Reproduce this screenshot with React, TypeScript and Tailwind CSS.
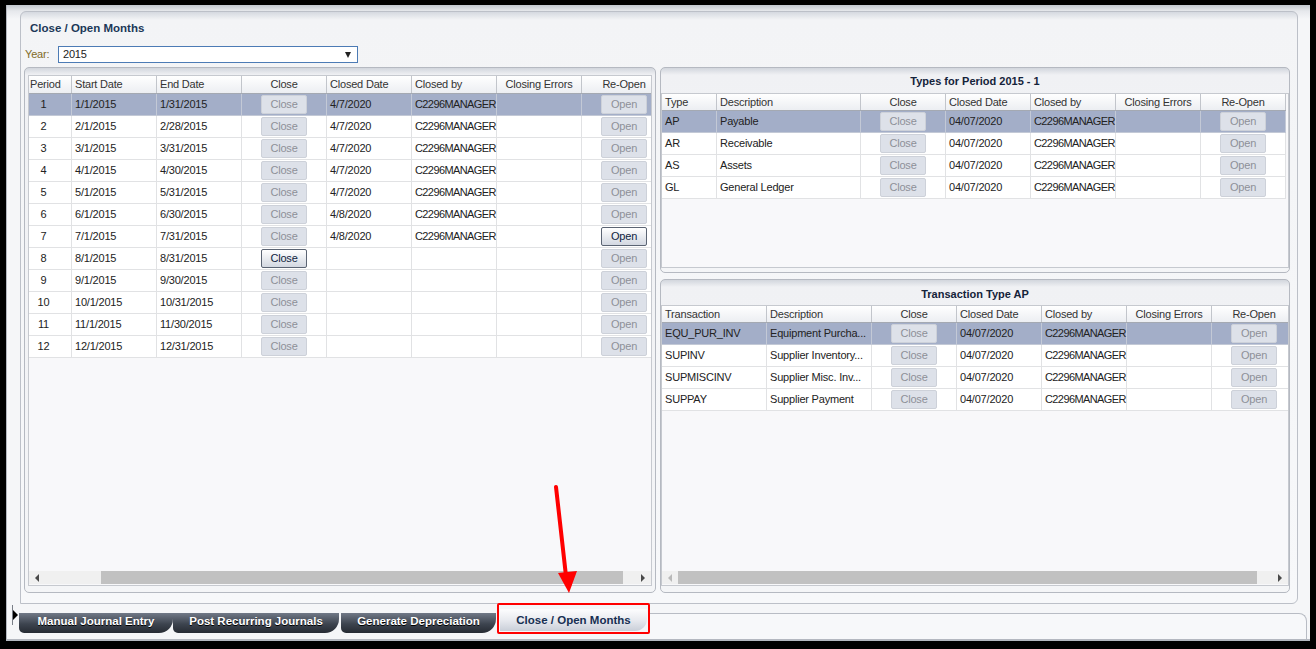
import React from 'react';

type Col = { label: string; w: string; head: string; cell: string };

const leftCols: Col[] = [
  { label: 'Period', w: 'w-[43px]', head: 'justify-start pl-[1px]', cell: 'justify-center pr-[13px]' },
  { label: 'Start Date', w: 'w-[85px]', head: 'justify-start pl-[3px]', cell: 'justify-start pl-[3px]' },
  { label: 'End Date', w: 'w-[85px]', head: 'justify-start pl-[3px]', cell: 'justify-start pl-[3px]' },
  { label: 'Close', w: 'w-[85px]', head: 'justify-center', cell: 'justify-center' },
  { label: 'Closed Date', w: 'w-[85px]', head: 'justify-start pl-[3px]', cell: 'justify-start pl-[3px]' },
  { label: 'Closed by', w: 'w-[85px]', head: 'justify-start pl-[3px]', cell: 'justify-start pl-[3px]' },
  { label: 'Closing Errors', w: 'w-[85px]', head: 'justify-center', cell: 'justify-start pl-[3px]' },
  { label: 'Re-Open', w: 'w-[85px]', head: 'justify-center', cell: 'justify-center' },
];

const typeCols: Col[] = [
  { label: 'Type', w: 'w-[55px]', head: 'justify-start pl-[3px]', cell: 'justify-start pl-[3px]' },
  { label: 'Description', w: 'w-[144px]', head: 'justify-start pl-[3px]', cell: 'justify-start pl-[3px]' },
  { label: 'Close', w: 'w-[85px]', head: 'justify-center', cell: 'justify-center' },
  { label: 'Closed Date', w: 'w-[85px]', head: 'justify-start pl-[3px]', cell: 'justify-start pl-[3px]' },
  { label: 'Closed by', w: 'w-[85px]', head: 'justify-start pl-[3px]', cell: 'justify-start pl-[3px]' },
  { label: 'Closing Errors', w: 'w-[85px]', head: 'justify-center', cell: 'justify-start pl-[3px]' },
  { label: 'Re-Open', w: 'w-[85px]', head: 'justify-center', cell: 'justify-center' },
];

const trxCols: Col[] = [
  { label: 'Transaction', w: 'w-[105px]', head: 'justify-start pl-[3px]', cell: 'justify-start pl-[3px]' },
  { label: 'Description', w: 'w-[105px]', head: 'justify-start pl-[3px]', cell: 'justify-start pl-[3px]' },
  { label: 'Close', w: 'w-[85px]', head: 'justify-center', cell: 'justify-center' },
  { label: 'Closed Date', w: 'w-[85px]', head: 'justify-start pl-[3px]', cell: 'justify-start pl-[3px]' },
  { label: 'Closed by', w: 'w-[85px]', head: 'justify-start pl-[3px]', cell: 'justify-start pl-[3px]' },
  { label: 'Closing Errors', w: 'w-[85px]', head: 'justify-center', cell: 'justify-start pl-[3px]' },
  { label: 'Re-Open', w: 'w-[85px]', head: 'justify-center', cell: 'justify-center' },
];

const ends = ['1/31', '2/28', '3/31', '4/30', '5/31', '6/30', '7/31', '8/31', '9/30', '10/31', '11/30', '12/31'];

const periodRows: string[][] = ends.map((end, i) => {
  const n = i + 1;
  const closed = n <= 7;
  return [
    String(n),
    `${n}/1/2015`,
    `${end}/2015`,
    n === 8 ? '#close!' : '#close',
    closed ? (n >= 6 ? '4/8/2020' : '4/7/2020') : '',
    closed ? 'C2296MANAGER' : '',
    '',
    n === 7 ? '#open!' : '#open',
  ];
});

const typeRows: string[][] = [
  ['AP', 'Payable'],
  ['AR', 'Receivable'],
  ['AS', 'Assets'],
  ['GL', 'General Ledger'],
].map(([t, d]) => [t, d, '#close', '04/07/2020', 'C2296MANAGER', '', '#open']);

const trxRows: string[][] = [
  ['EQU_PUR_INV', 'Equipment Purcha...'],
  ['SUPINV', 'Supplier Inventory...'],
  ['SUPMISCINV', 'Supplier Misc. Inv...'],
  ['SUPPAY', 'Supplier Payment'],
].map(([t, d]) => [t, d, '#close', '04/07/2020', 'C2296MANAGER', '', '#open']);

function Btn({ label, on }: { label: string; on?: boolean }) {
  if (on) {
    return (
      <span className="inline-flex h-[19px] w-[46px] items-center justify-center rounded-[2px] border border-[#5b6473] bg-gradient-to-b from-white to-[#d3d8e1] text-[#0f2340]">
        {label}
      </span>
    );
  }
  return (
    <span className="inline-flex h-[19px] w-[46px] items-center justify-center rounded-[2px] border border-[#cdd1d9] bg-[#dde1e9] text-[#8d9098]">
      {label}
    </span>
  );
}

function renderCell(v: string) {
  if (v === '#close') return <Btn label="Close" />;
  if (v === '#close!') return <Btn label="Close" on />;
  if (v === '#open') return <Btn label="Open" />;
  if (v === '#open!') return <Btn label="Open" on />;
  // the user name is wider in this font than in the original, so pull it in
  if (v === 'C2296MANAGER') return <span className="whitespace-nowrap tracking-[-0.6px]">{v}</span>;
  return <span className="whitespace-nowrap">{v}</span>;
}

function Grid({ cols, rows, headH }: { cols: Col[]; rows: string[][]; headH: string }) {
  return (
    <div className="flex w-max flex-col">
      <div className={`flex ${headH} border-b border-[#a4a9b2] bg-gradient-to-b from-white to-[#eceef2] text-[#333]`}>
        {cols.map((c, i) => (
          <div key={i} className={`${c.w} ${c.head} flex shrink-0 items-center whitespace-nowrap border-r border-[#c2c5cb]`}>
            {c.label}
          </div>
        ))}
      </div>
      {rows.map((r, ri) => (
        <div key={ri} className={`flex h-[22px] ${ri === 0 ? 'bg-[#a3aec8]' : 'bg-white'}`}>
          {r.map((v, ci) => (
            <div
              key={ci}
              className={`${cols[ci].w} ${cols[ci].cell} flex shrink-0 items-center border-b border-r ${
                ri === 0 ? 'border-[#c3c9d6]' : 'border-[#e1e2e4]'
              }`}
            >
              {renderCell(v)}
            </div>
          ))}
        </div>
      ))}
    </div>
  );
}

function ArrowL({ light }: { light?: boolean }) {
  return (
    <span
      className={`h-0 w-0 border-y-[4px] border-r-[4px] border-y-transparent ${light ? 'border-r-[#b9b9b9]' : 'border-r-[#4a4a4a]'}`}
    />
  );
}

function ArrowR() {
  return <span className="h-0 w-0 border-y-[4px] border-l-[4px] border-y-transparent border-l-[#4a4a4a]" />;
}

export default function App() {
  return (
    <div className="relative h-[649px] w-[1316px] overflow-hidden bg-black pb-[8px] pl-[6px] pr-[6px] pt-[5px] font-['Liberation_Sans',Arial,sans-serif] text-[11px] leading-none tracking-[-0.2px] text-[#222]">
      <div className="flex h-full flex-col border-b-[2px] border-l border-[#b4b8c0] bg-[linear-gradient(#c2c7cf,#e6e8ec_6px,#f5f6f8_14px)] pt-[6px]">
        {/* main panel */}
        <div className="ml-[13px] mr-[12px] flex h-[593px] flex-col rounded-t-[6px] rounded-br-[6px] border border-[#bcc0c8] bg-[linear-gradient(#d5d9e0,#f3f4f6_8px,#f7f8fa)] pl-[3px] pr-[7px]">
          <div className="ml-[6px] mt-[10px] h-[12px] text-[11.5px] font-bold leading-[12px] tracking-normal text-[#1b3858]">
            Close / Open Months
          </div>
          <div className="mt-[12px] flex h-[17px] items-center">
            <span className="ml-[1px] w-[33px] text-[#806a26]">Year:</span>
            <div className="flex h-[17px] w-[300px] items-center justify-between border border-[#4c7bb5] bg-white pl-[4px] pr-[6px] text-[#222]">
              <span>2015</span>
              <span className="h-0 w-0 border-x-[3.5px] border-t-[6px] border-x-transparent border-t-[#222]" />
            </div>
          </div>

          <div className="mt-[4px] flex h-[526px] gap-[4px]">
            {/* left panel */}
            <div className="flex h-full w-[632px] flex-col rounded-[5px] border border-[#b5b9c1] bg-[linear-gradient(#d2d6dd,#f0f1f4_7px,#f4f5f7)] px-[3px] pb-[6px] pt-[7px]">
              <div className="flex flex-1 flex-col overflow-hidden border border-[#c6c9cf] bg-[#f8f8fa]">
                <div className="flex-1 overflow-hidden">
                  <Grid cols={leftCols} rows={periodRows} headH="h-[18px]" />
                </div>
                <div className="mb-[1px] flex h-[13px] items-center bg-[#f0f0f0]">
                  <div className="flex w-[16px] justify-center">
                    <ArrowL />
                  </div>
                  <div className="w-[56px]" />
                  <div className="h-[13px] w-[522px] bg-[#c1c1c1]" />
                  <div className="flex-1" />
                  <div className="flex w-[16px] justify-center">
                    <ArrowR />
                  </div>
                </div>
              </div>
            </div>

            {/* right column */}
            <div className="flex h-full w-[630px] flex-col gap-[6px]">
              <div className="flex h-[206px] flex-col rounded-[5px] border border-[#b5b9c1] bg-[linear-gradient(#d2d6dd,#f0f1f4_7px,#f4f5f7)] pb-[4px]">
                <div className="flex h-[25px] items-center justify-center pt-[2px] font-bold tracking-normal text-[#14233a]">
                  Types for Period 2015 - 1
                </div>
                <div className="flex-1 overflow-hidden border border-[#c6c9cf] bg-[#f8f8fa]">
                  <Grid cols={typeCols} rows={typeRows} headH="h-[17px]" />
                </div>
              </div>

              <div className="flex flex-1 flex-col rounded-[5px] border border-[#b5b9c1] bg-[linear-gradient(#d2d6dd,#f0f1f4_7px,#f4f5f7)] pb-[6px]">
                <div className="flex h-[25px] items-center justify-center pt-[4px] font-bold tracking-normal text-[#14233a]">
                  Transaction Type AP
                </div>
                <div className="flex flex-1 flex-col overflow-hidden border border-[#c6c9cf] bg-[#f8f8fa]">
                  <div className="flex-1 overflow-hidden">
                    <Grid cols={trxCols} rows={trxRows} headH="h-[17px]" />
                  </div>
                  <div className="mb-[1px] flex h-[13px] items-center bg-[#f0f0f0]">
                    <div className="flex w-[16px] justify-center">
                      <ArrowL light />
                    </div>
                    <div className="h-[13px] w-[579px] bg-[#c1c1c1]" />
                    <div className="flex-1" />
                    <div className="flex w-[16px] justify-center">
                      <ArrowR />
                    </div>
                  </div>
                </div>
              </div>
            </div>
          </div>
        </div>

        {/* tab strip */}
        <div className="ml-[5px] mr-[3px] mt-[9px] flex flex-1 items-start">
          <div className="relative -mt-[8px] flex h-[20px] w-[7px] items-center border-l border-[#7a7f88]">
            <span className="h-0 w-0 border-y-[5px] border-l-[5px] border-y-transparent border-l-black" />
          </div>
          <div className="flex h-[20px] w-[154px] items-center justify-center rounded-bl-[5px] rounded-br-[14px] bg-[linear-gradient(#717987,#3d444f_55%,#262b33)] pb-[2px] text-[11.5px] font-bold tracking-normal text-white [text-shadow:0_1px_0_#000]">
            Manual Journal Entry
          </div>
          <div className="flex h-[20px] w-[166px] items-center justify-center rounded-bl-[5px] rounded-br-[14px] bg-[linear-gradient(#717987,#3d444f_55%,#262b33)] pb-[2px] text-[11.5px] font-bold tracking-normal text-white [text-shadow:0_1px_0_#000]">
            Post Recurring Journals
          </div>
          <div className="ml-[2px] flex h-[20px] w-[155px] items-center justify-center rounded-bl-[5px] rounded-br-[14px] bg-[linear-gradient(#717987,#3d444f_55%,#262b33)] pb-[2px] text-[11.5px] font-bold tracking-normal text-white [text-shadow:0_1px_0_#000]">
            Generate Depreciation
          </div>
          <div className="-mt-[10px] ml-[1px] h-[31px] w-[153px] rounded-[2px] border-2 border-[#ff0000] px-[1px] pb-[1px] pt-[4px]">
            <div className="flex h-full items-center justify-center rounded-br-[12px] bg-[linear-gradient(#fdfdfe,#e8eaef_50%,#c9ced8)] pt-[2px] text-[11.5px] font-bold tracking-normal text-[#172f52]">
              Close / Open Months
            </div>
          </div>
          <div className="h-[26px] flex-1 rounded-tr-[8px] border-r border-t border-[#b8bcc4] bg-[#f7f8fa]" />
        </div>
      </div>

      {/* annotation arrow */}
      <svg className="pointer-events-none absolute left-0 top-0" width="1316" height="649" viewBox="0 0 1316 649">
        <line x1="556" y1="487" x2="566" y2="576" stroke="#ff0000" strokeWidth="4" strokeLinecap="round" />
        <polygon points="558,573 577,571 569,593" fill="#ff0000" />
      </svg>
    </div>
  );
}
